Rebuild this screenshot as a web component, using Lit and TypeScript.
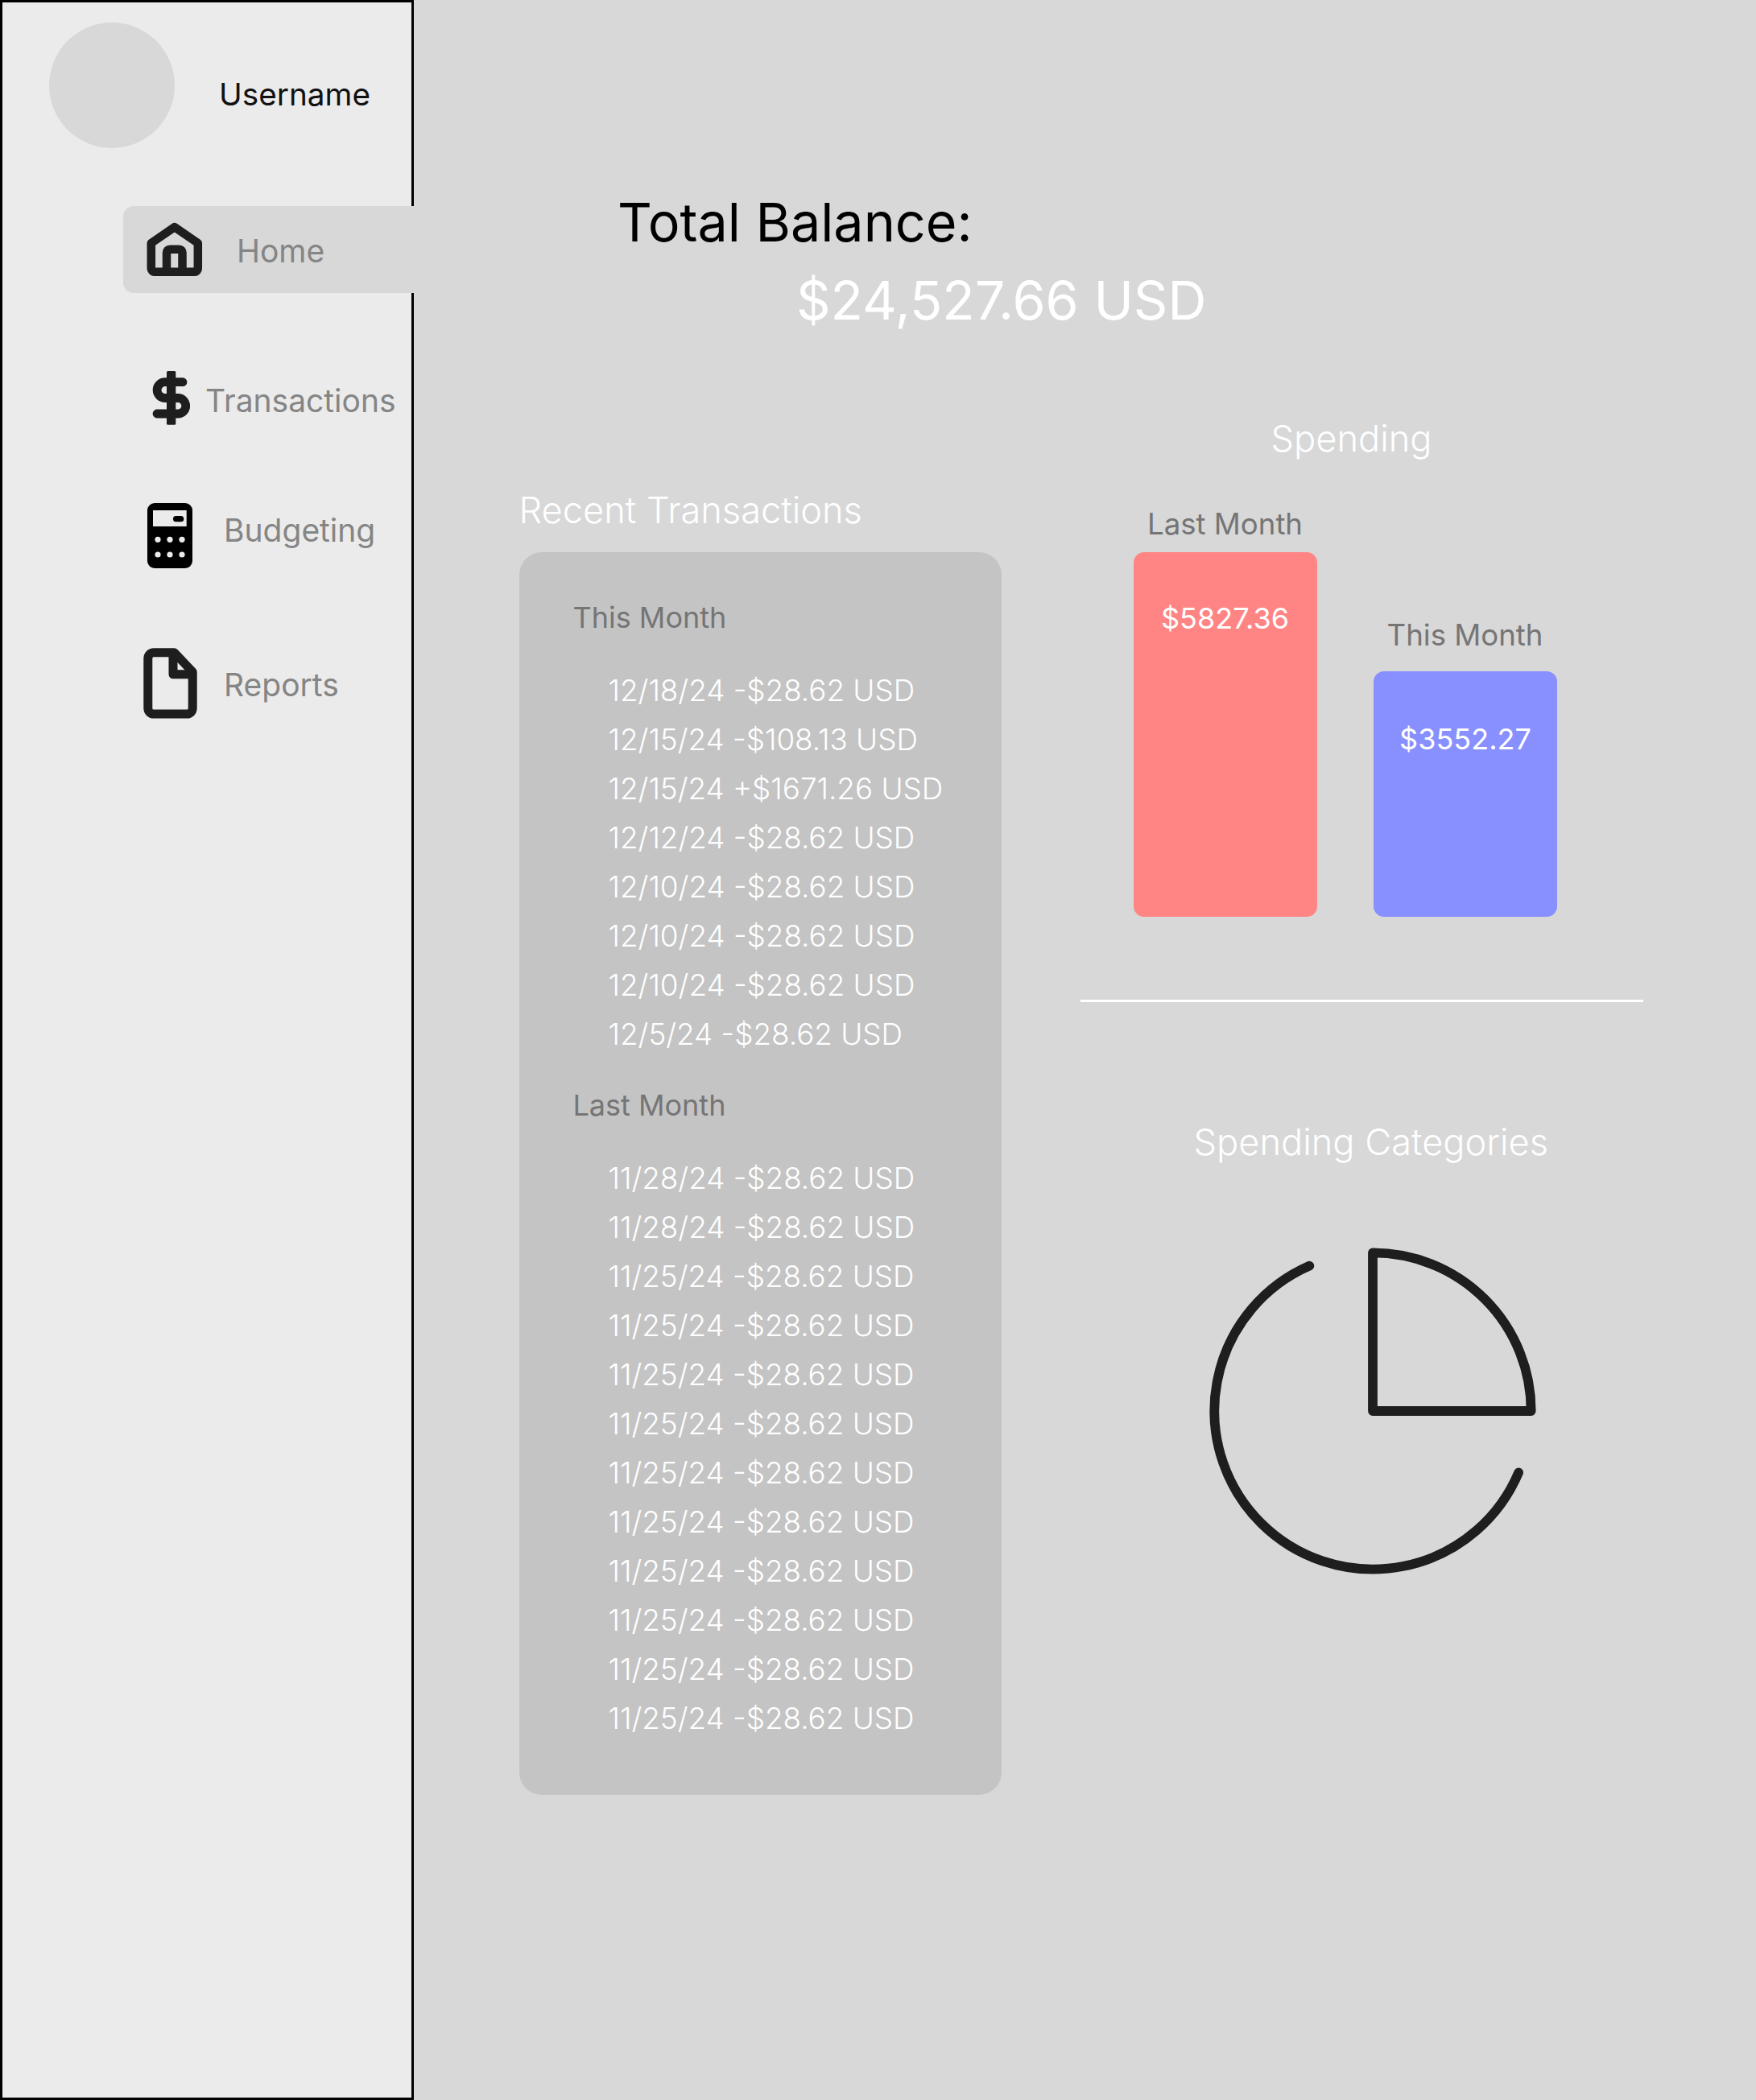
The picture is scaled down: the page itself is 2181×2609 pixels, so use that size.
import { LitElement, html, css, svg } from "lit";
import { customElement } from "lit/decorators.js";

const thisMonth = [
  "12/18/24 -$28.62 USD",
  "12/15/24 -$108.13 USD",
  "12/15/24 +$1671.26 USD",
  "12/12/24 -$28.62 USD",
  "12/10/24 -$28.62 USD",
  "12/10/24 -$28.62 USD",
  "12/10/24 -$28.62 USD",
  "12/5/24 -$28.62 USD",
];
const lastMonth = [
  "11/28/24 -$28.62 USD",
  "11/28/24 -$28.62 USD",
  ...Array(10).fill("11/25/24 -$28.62 USD"),
];

@customElement("app-root")
export class AppRoot extends LitElement {
  static styles = css`
    :host {
      display: flex;
      width: 2181px;
      height: 2609px;
      background: #d8d8d8;
      font-family: Inter, "Liberation Sans", sans-serif;
      overflow: hidden;
    }
    .side {
      box-sizing: border-box;
      width: 514px;
      height: 2609px;
      flex: none;
      background: #ebebeb;
      border: 3px solid #000;
    }
    .profile { display: flex; align-items: flex-start; padding: 25px 0 0 58px; }
    .avatar { width: 156px; height: 156px; border-radius: 50%; background: #d8d8d8; flex: none; }
    .username { margin: 65px 0 0 55px; font-size: 38.7px; line-height: 48px; color: #111; }
    .nav { display: flex; flex-direction: column; }
    .item { display: flex; align-items: center; color: #858585; font-size: 39px; line-height: 48px; }
    .item svg { display: block; flex: none; }
    .home {
      height: 108px; margin: 72px -3px 0 150px; padding-left: 29px;
      background: #d8d8d8; border-radius: 13px 0 0 13px;
    }
    .home span { margin: 3px 0 0 42px; }
    .tx { margin: 97px 0 0 186px; }
    .tx span { margin: 7px 0 0 19px; }
    .budget { margin: 97px 0 0 180px; }
    .budget span { margin: 0 0 13px 39px; }
    .reports { margin: 99px 0 0 175px; }
    .reports span { margin: 3px 0 0 33px; }

    .main { flex: 1; padding-top: 237px; }
    .total { margin: 0; padding-left: 253px; font-size: 66.4px; line-height: 78px; font-weight: 400; color: #000; }
    .amount { margin: 19px 0 0; padding-left: 475px; font-size: 66.4px; line-height: 78px; font-weight: 400; color: #fff; }
    .cols { display: grid; grid-template-columns: 599px 699px; column-gap: 98px; padding: 1px 0 0 130.5px; align-items: start; }
    h2 { margin: 0; font-size: 45.2px; line-height: 58px; font-weight: 300; color: #fff; }
    .left { padding-top: 192px; }
    .card {
      box-sizing: border-box; height: 1544px; margin-top: 23px;
      padding: 59px 0 0 67px; background: #c4c4c4; border-radius: 28px;
    }
    .label { font-size: 36px; line-height: 44px; color: #757575; }
    .rows { margin-top: 37.5px; padding-left: 44px; font-size: 36.8px; line-height: 61px; font-weight: 300; color: #fff; }
    .second { margin-top: 36.5px; }
    .spending { margin-top: 103px; padding-left: 237px; }
    .bars { display: flex; align-items: flex-end; gap: 70px; margin-top: 55px; padding-left: 66px; }
    .bar-col { width: 228px; text-align: center; }
    .bar-col .label { margin-bottom: 13px; font-size: 36.6px; }
    .bar-col.blue .label { margin-bottom: 23px; }
    .bar { box-sizing: border-box; border-radius: 13px; font-size: 36px; line-height: 44px; color: #fff; }
    .red .bar { height: 453px; padding-top: 60px; background: #ff8585; }
    .blue .bar { height: 305px; padding-top: 62px; padding-left: 1px; background: #8890ff; }
    hr { height: 3px; margin: 103px 0 0; border: 0; background: #fff; }
    .categories { margin-top: 145px; padding-left: 141px; }
    .pie { display: block; margin: 68.5px 0 0 127.7px; }
  `;

  private homeIcon() {
    return html`<svg width="70" height="68" viewBox="12 9.5 70 68" fill="none" stroke="#1e1e1e" stroke-width="10.5" stroke-linejoin="round">
      <path d="M46.8 15.7 75.8 35.5V66Q75.8 71.3 70.6 71.3H23Q17.8 71.3 17.8 66V35.5Z" />
      <path d="M37 71V47.5Q37 43.3 41.2 43.3H52.3Q56.5 43.3 56.5 47.5V71" />
    </svg>`;
  }
  private dollarIcon() {
    return html`<svg width="47" height="67" viewBox="14 11 47 67" fill="none" stroke="#1e1e1e" stroke-width="10.8" stroke-linecap="round">
      <path d="M52 24.7H30A9.9 9.9 0 0 0 30 44.5H46A9.75 9.75 0 0 1 46 64H20" />
      <rect x="32" y="11" width="11.3" height="66.7" rx="1.5" fill="#1e1e1e" stroke="none" />
    </svg>`;
  }
  private calcIcon() {
    const dots = [21, 36, 51].flatMap((x) => [50.3, 69].map((y) => svg`<circle cx=${x} cy=${y} r="3.6" fill="#ebebeb" />`));
    return html`<svg width="56" height="81" viewBox="8 5 56 81">
      <rect x="8" y="5" width="56" height="81" rx="9" fill="#000" />
      <rect x="15" y="14" width="41.7" height="20" fill="#ebebeb" />
      <rect x="40" y="21" width="13.3" height="7.3" rx="3.6" fill="#000" />
      ${dots}
    </svg>`;
  }
  private fileIcon() {
    return html`<svg width="67" height="88" viewBox="7.5 4.2 67 88" fill="none" stroke="#1e1e1e" stroke-width="11" stroke-linejoin="round">
      <path d="M20.3 10H46L68.7 34V79.3A7 7 0 0 1 61.7 86.3H20.3A7 7 0 0 1 13.3 79.3V17A7 7 0 0 1 20.3 10Z" />
      <path d="M44.5 10V37H68.7" />
    </svg>`;
  }

  render() {
    return html`
      <aside class="side">
        <div class="profile">
          <div class="avatar"></div>
          <div class="username">Username</div>
        </div>
        <nav class="nav">
          <div class="item home">${this.homeIcon()}<span>Home</span></div>
          <div class="item tx">${this.dollarIcon()}<span>Transactions</span></div>
          <div class="item budget">${this.calcIcon()}<span>Budgeting</span></div>
          <div class="item reports">${this.fileIcon()}<span>Reports</span></div>
        </nav>
      </aside>
      <main class="main">
        <h1 class="total">Total Balance:</h1>
        <div class="amount">$24,527.66 USD</div>
        <div class="cols">
          <section class="left">
            <h2>Recent Transactions</h2>
            <div class="card">
              <div class="label">This Month</div>
              <div class="rows">${thisMonth.map((r) => html`<div>${r}</div>`)}</div>
              <div class="label second">Last Month</div>
              <div class="rows">${lastMonth.map((r) => html`<div>${r}</div>`)}</div>
            </div>
          </section>
          <section class="right">
            <h2 class="spending">Spending</h2>
            <div class="bars">
              <div class="bar-col red">
                <div class="label">Last Month</div>
                <div class="bar">$5827.36</div>
              </div>
              <div class="bar-col blue">
                <div class="label">This Month</div>
                <div class="bar">$3552.27</div>
              </div>
            </div>
            <hr />
            <h2 class="categories">Spending Categories</h2>
            <svg class="pie" width="472" height="472" viewBox="0 0 24 24" fill="none" stroke="#1e1e1e" stroke-width="0.6" stroke-linecap="round" stroke-linejoin="round">
              <path d="M21.21 15.89A10 10 0 1 1 8 2.83" />
              <path d="M22 12A10 10 0 0 0 12 2v10z" />
            </svg>
          </section>
        </div>
      </main>
    `;
  }
}
